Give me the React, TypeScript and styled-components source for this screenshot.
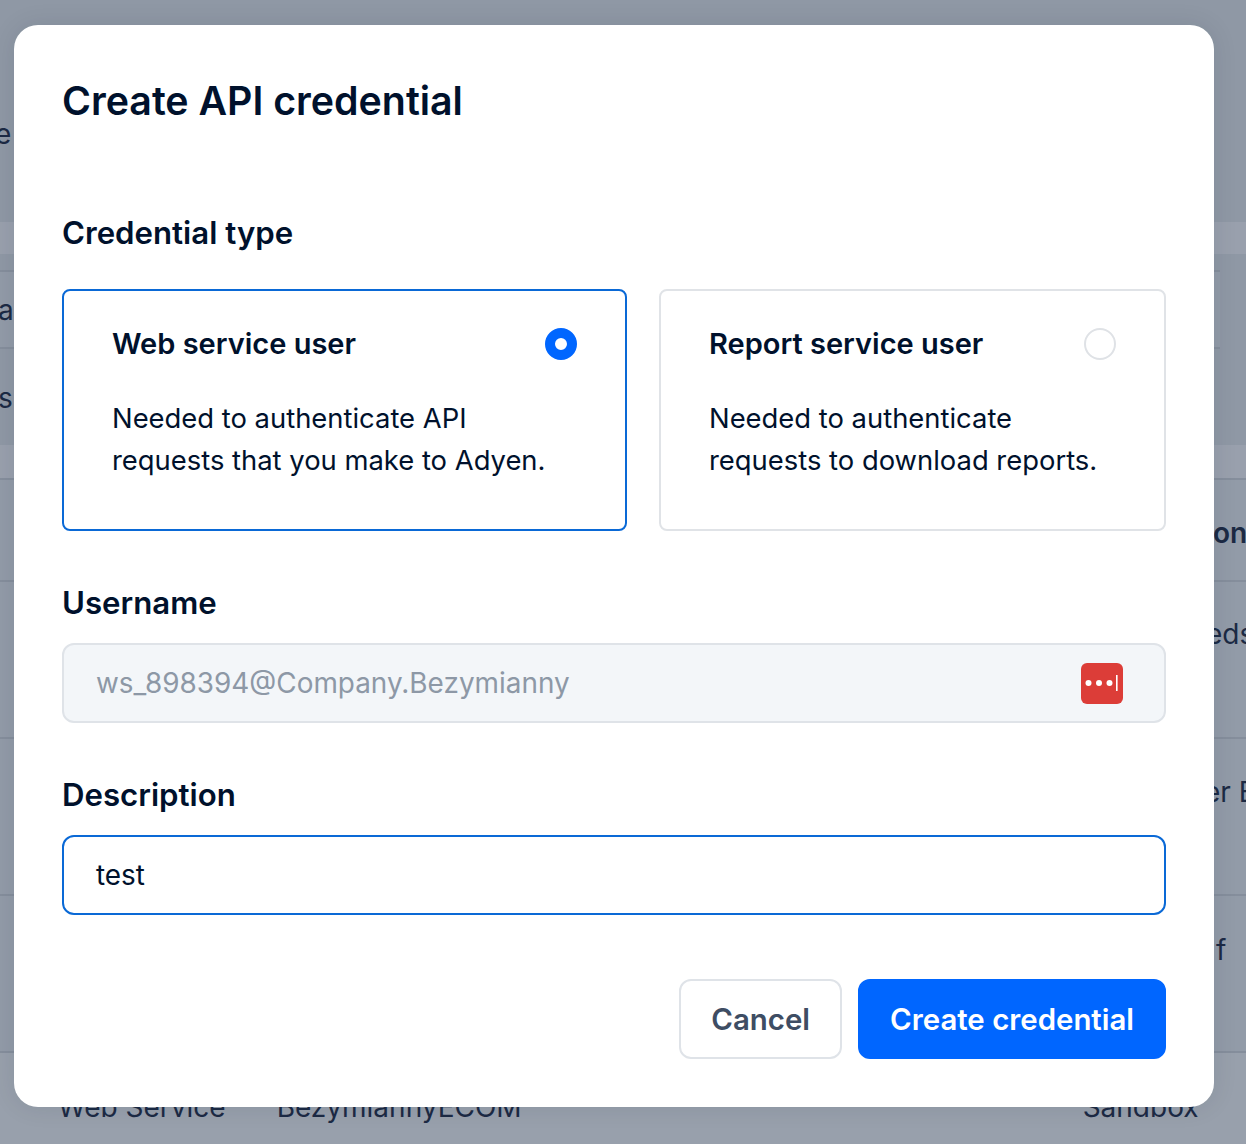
import React from "react";
import styled, { createGlobalStyle } from "styled-components";

const Global = createGlobalStyle`
  html, body { margin: 0; padding: 0; height: 100%; overflow: hidden; }
  body { font-family: Inter, "Liberation Sans", sans-serif; background: #98a0ac; }
  * { box-sizing: border-box; }
`;

const Page = styled.div`
  position: relative;
  width: 1246px;
  height: 1144px;
  overflow: hidden;
  background: #98a0ac;
  color: #1c2a44;
  font-size: 28px;
`;

const Band = styled.div<{ $h: number; $bg: string; $line?: boolean; $pad?: number }>`
  height: ${(p) => p.$h}px;
  background: ${(p) => p.$bg};
  border-bottom: ${(p) => (p.$line ? "2px solid #858e9c" : "none")};
  padding-top: ${(p) => p.$pad ?? 0}px;
  display: flex;
  align-items: flex-start;
  white-space: nowrap;
  overflow: hidden;
`;

const MiddleSection = styled.div`
  display: flex;
  height: 191px;
  background: #959daa;
`;

const MiddleRows = styled.div`
  flex: 1;
  min-width: 0;
`;

const SidePanel = styled.div`
  flex: none;
  width: 26px;
  background: #8f98a5;
`;

const EdgeText = styled.span<{ $bold?: boolean; $left: number; $right?: number }>`
  flex: none;
  margin-left: ${(p) => p.$left}px;
  margin-right: ${(p) => p.$right ?? 0}px;
  font-weight: ${(p) => (p.$bold ? 600 : 400)};
`;

const Modal = styled.div`
  position: absolute;
  left: 14px;
  top: 25px;
  width: 1200px;
  height: 1082px;
  background: #fff;
  border-radius: 24px;
  padding: 48px;
  box-shadow: 0 0 24px rgba(20, 30, 50, 0.1);
  color: #00112c;
  display: flex;
  flex-direction: column;
`;

const Title = styled.h1`
  margin: 0;
  font-size: 39.3px;
  line-height: 56px;
  font-weight: 600;
`;

const Label = styled.h2<{ $top: number }>`
  margin: ${(p) => p.$top}px 0 0;
  font-size: 31.2px;
  line-height: 40px;
  font-weight: 600;
`;

const CardGrid = styled.div`
  display: grid;
  grid-template-columns: 565px 507px;
  gap: 32px;
  margin-top: 36px;
`;

const Card = styled.div<{ $active?: boolean }>`
  height: 242px;
  border: 2px solid ${(p) => (p.$active ? "#0a69d6" : "#e0e3e7")};
  border-radius: 8px;
  padding: 34px 48px 0;
`;

const CardHead = styled.div`
  display: flex;
  justify-content: space-between;
  align-items: center;
  height: 36px;
`;

const CardTitle = styled.div`
  font-size: 29px;
  font-weight: 600;
`;

const Radio = styled.span<{ $on?: boolean }>`
  width: 32px;
  height: 32px;
  margin-top: 2px;
  border-radius: 50%;
  border: ${(p) => (p.$on ? "10px solid #0066ff" : "2px solid #dfe2e6")};
  background: #fff;
`;

const CardText = styled.p`
  margin: 36px 0 0;
  font-size: 27.4px;
  line-height: 42px;
  font-weight: 400;
  color: #00112c;
`;

const Field = styled.div<{ $active?: boolean; $disabled?: boolean }>`
  height: 80px;
  margin-top: 20px;
  border: 2px solid ${(p) => (p.$active ? "#0a69d6" : "#dfe3e8")};
  border-radius: 12px;
  background: ${(p) => (p.$disabled ? "#f3f6f9" : "#fff")};
  color: ${(p) => (p.$disabled ? "#8d98a6" : "#00112c")};
  padding: 0 41px 0 32px;
  display: flex;
  align-items: center;
  justify-content: space-between;
  font-size: 27.9px;
`;

const FieldIcon = styled.svg`
  flex: none;
  margin-top: 2px;
`;

const Actions = styled.div`
  display: flex;
  justify-content: flex-end;
  gap: 16px;
  margin-top: 64px;
`;

const Button = styled.button<{ $primary?: boolean }>`
  height: 80px;
  padding: 0 30px;
  border-radius: 12px;
  font-family: inherit;
  font-size: 29.4px;
  font-weight: 600;
  border: 2px solid ${(p) => (p.$primary ? "#0066ff" : "#dfe3e8")};
  background: ${(p) => (p.$primary ? "#0066ff" : "#fff")};
  color: ${(p) => (p.$primary ? "#fff" : "#3e4d63")};
`;

const KeyIcon = () => (
  <FieldIcon width="42" height="42" viewBox="0 0 42 42" aria-hidden="true">
    <rect x="0" y="0" width="42" height="41" rx="6" fill="#dc3d38" />
    <circle cx="7.5" cy="20" r="3" fill="#fff" />
    <circle cx="18" cy="20" r="3" fill="#fff" />
    <circle cx="28.5" cy="20" r="3" fill="#fff" />
    <rect x="35" y="12" width="1.6" height="16" fill="#fff" />
  </FieldIcon>
);

export default function App() {
  return (
    <Page>
      <Global />
      <Band $h={222} $bg="#8f98a5" $pad={117}>
        <EdgeText $left={-5}>e</EdgeText>
      </Band>
      <Band $h={32} $bg="#99a0ad" />
      <MiddleSection>
        <MiddleRows>
          <Band $h={18} $bg="#8f98a5" $line />
          <Band $h={77} $bg="#929ba8" $line $pad={21}>
            <EdgeText $left={-2}>a</EdgeText>
          </Band>
          <Band $h={96} $bg="#8f98a5" $pad={32}>
            <EdgeText $left={-2}>s</EdgeText>
          </Band>
        </MiddleRows>
        <SidePanel />
      </MiddleSection>
      <Band $h={35} $bg="#99a0ad" $line />
      <Band $h={102} $bg="#929ba8" $line $pad={36}>
        <EdgeText $left={1213} $bold>on</EdgeText>
      </Band>
      <Band $h={157} $bg="#929ba8" $line $pad={35}>
        <EdgeText $left={1206}>eds</EdgeText>
      </Band>
      <Band $h={157} $bg="#929ba8" $line $pad={36}>
        <EdgeText $left={1204}>er E</EdgeText>
      </Band>
      <Band $h={157} $bg="#929ba8" $line $pad={37}>
        <EdgeText $left={1216}>f</EdgeText>
      </Band>
      <Band $h={91} $bg="#98a0ac" $pad={37}>
        <EdgeText $left={58} $right={51}>Web Service</EdgeText>
        <EdgeText $left={0} $right={561}>BezymiannyECOM</EdgeText>
        <EdgeText $left={0}>Sandbox</EdgeText>
      </Band>
      <Modal>
        <Title>Create API credential</Title>
        <Label $top={84}>Credential type</Label>
        <CardGrid>
          <Card $active>
            <CardHead>
              <CardTitle>Web service user</CardTitle>
              <Radio $on />
            </CardHead>
            <CardText>
              Needed to authenticate API
              <br />
              requests that you make to Adyen.
            </CardText>
          </Card>
          <Card>
            <CardHead>
              <CardTitle>Report service user</CardTitle>
              <Radio />
            </CardHead>
            <CardText>
              Needed to authenticate
              <br />
              requests to download reports.
            </CardText>
          </Card>
        </CardGrid>
        <Label $top={52}>Username</Label>
        <Field $disabled>
          <span>ws_898394@Company.Bezymianny</span>
          <KeyIcon />
        </Field>
        <Label $top={52}>Description</Label>
        <Field $active>
          <span>test</span>
        </Field>
        <Actions>
          <Button>Cancel</Button>
          <Button $primary>Create credential</Button>
        </Actions>
      </Modal>
    </Page>
  );
}
